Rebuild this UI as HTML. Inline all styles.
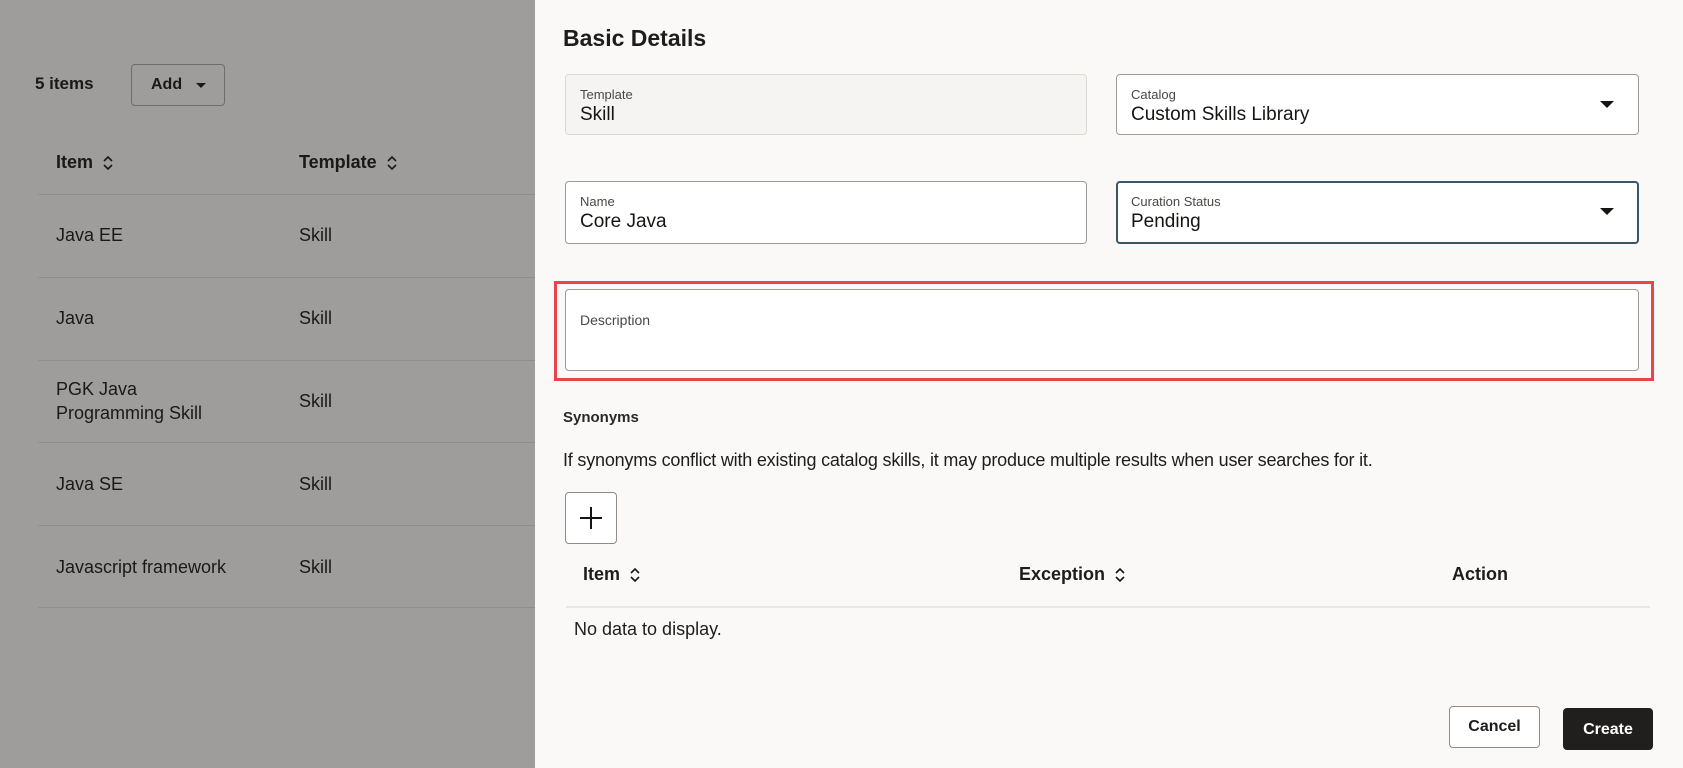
<!DOCTYPE html>
<html><head><meta charset="utf-8"><style>
*{margin:0;padding:0;box-sizing:border-box}
body{width:1683px;height:768px;overflow:hidden;background:#9e9d9c;font-family:"Liberation Sans",sans-serif;color:#1f1d1b;position:relative}
.a{position:absolute;white-space:nowrap}
.l{color:#1a1918}
.hl{position:absolute;left:38px;width:497px;height:1px;background:#8f8e8d}
.panel{position:absolute;left:535px;top:0;width:1148px;height:768px;background:#fbf9f8}
.box{position:absolute;border:1px solid #bdbab6;border-radius:4px;background:#fff}
.lab{position:absolute;left:14px;top:12px;font-size:13px;color:#4a4745}
.val{position:absolute;left:14px;top:29px;font-size:19px;color:#161513}
.caret{position:absolute;right:24px;top:26px;width:0;height:0;border-left:7px solid transparent;border-right:7px solid transparent;border-top:7px solid #161513}
.sort{display:inline-block;margin-left:10px;vertical-align:middle}
</style></head><body>
<div class="a l" style="left:35px;top:74px;font-size:17px;font-weight:bold">5 items</div>
<div class="a" style="left:131px;top:64px;width:94px;height:42px;border:1px solid #6e6d6c;border-radius:4px"></div>
<div class="a l" style="left:151px;top:76px;font-size:16px;font-weight:bold">Add</div>
<div class="a" style="left:196px;top:83px;border-left:5px solid transparent;border-right:5px solid transparent;border-top:5px solid #1a1918"></div>
<div class="a l" style="left:56px;top:152px;font-size:18px;font-weight:bold">Item<svg class="sort" width="10" height="16" viewBox="0 0 10 16"><path d="M1 6L5 2L9 6M1 10L5 14L9 10" fill="none" stroke="#1a1918" stroke-width="1.6"/></svg></div>
<div class="a l" style="left:299px;top:152px;font-size:18px;font-weight:bold">Template<svg class="sort" width="10" height="16" viewBox="0 0 10 16"><path d="M1 6L5 2L9 6M1 10L5 14L9 10" fill="none" stroke="#1a1918" stroke-width="1.6"/></svg></div>
<div class="hl" style="top:194px"></div><div class="hl" style="top:277px"></div><div class="hl" style="top:360px"></div><div class="hl" style="top:442px"></div><div class="hl" style="top:525px"></div><div class="hl" style="top:607px"></div>
<div class="a l" style="left:56px;top:225px;font-size:18px">Java EE</div><div class="a l" style="left:299px;top:225px;font-size:18px">Skill</div>
<div class="a l" style="left:56px;top:308px;font-size:18px">Java</div><div class="a l" style="left:299px;top:308px;font-size:18px">Skill</div>
<div class="a l" style="left:56px;top:379px;font-size:18px">PGK Java</div><div class="a l" style="left:56px;top:403px;font-size:18px">Programming Skill</div><div class="a l" style="left:299px;top:391px;font-size:18px">Skill</div>
<div class="a l" style="left:56px;top:474px;font-size:18px">Java SE</div><div class="a l" style="left:299px;top:474px;font-size:18px">Skill</div>
<div class="a l" style="left:56px;top:557px;font-size:18px">Javascript framework</div><div class="a l" style="left:299px;top:557px;font-size:18px">Skill</div>

<div class="panel"></div>
<div class="a" style="left:563px;top:25px;font-size:23px;font-weight:bold">Basic Details</div>
<div class="box" style="left:565px;top:74px;width:522px;height:61px;background:#f6f4f2;border-color:#dcd9d5"><div class="lab">Template</div><div class="val">Skill</div></div>
<div class="box" style="left:1116px;top:74px;width:523px;height:61px;border-color:#9e9b97"><div class="lab">Catalog</div><div class="val">Custom Skills Library</div><div class="caret"></div></div>
<div class="box" style="left:565px;top:181px;width:522px;height:63px;border-color:#9e9b97"><div class="lab">Name</div><div class="val">Core Java</div></div>
<div class="box" style="left:1116px;top:181px;width:523px;height:63px;border:2px solid #3a5468"><div class="lab" style="left:13px;top:11px">Curation Status</div><div class="val" style="left:13px;top:28px">Pending</div><div class="caret" style="right:23px;top:25px"></div></div>
<div class="a" style="left:554px;top:281px;width:1100px;height:100px;border:3px solid #e8454a"></div>
<div class="box" style="left:565px;top:289px;width:1074px;height:82px;border-color:#9e9b97"><div class="lab" style="top:22px;font-size:14px">Description</div></div>
<div class="a" style="left:563px;top:409px;font-size:15px;font-weight:bold;color:#2b2927">Synonyms</div>
<div class="a" style="left:563px;top:450px;font-size:18px;letter-spacing:-0.2px">If synonyms conflict with existing catalog skills, it may produce multiple results when user searches for it.</div>
<div class="box" style="left:565px;top:492px;width:52px;height:52px;border-color:#8f8c88"><svg style="position:absolute;left:13px;top:13px" width="24" height="24"><path d="M12 1V23M1 12H23" stroke="#161513" stroke-width="2"/></svg></div>
<div class="a" style="left:583px;top:564px;font-size:18px;font-weight:bold">Item<svg class="sort" width="10" height="16" viewBox="0 0 10 16"><path d="M1 6L5 2L9 6M1 10L5 14L9 10" fill="none" stroke="#161513" stroke-width="1.6"/></svg></div>
<div class="a" style="left:1019px;top:564px;font-size:18px;font-weight:bold">Exception<svg class="sort" width="10" height="16" viewBox="0 0 10 16"><path d="M1 6L5 2L9 6M1 10L5 14L9 10" fill="none" stroke="#161513" stroke-width="1.6"/></svg></div>
<div class="a" style="left:1452px;top:564px;font-size:18px;font-weight:bold">Action</div>
<div class="a" style="left:566px;top:606px;width:1084px;height:2px;background:#e9e6e3"></div>
<div class="a" style="left:574px;top:619px;font-size:18px">No data to display.</div>
<div class="a" style="left:1449px;top:706px;width:91px;height:42px;border:1px solid #8f8c88;border-radius:4px;background:#fff;font-size:16px;font-weight:bold;text-align:center;line-height:40px">Cancel</div>
<div class="a" style="left:1563px;top:708px;width:90px;height:42px;border-radius:4px;background:#201f1e;color:#fff;font-size:16px;font-weight:bold;text-align:center;line-height:44px">Create</div>
</body></html>
